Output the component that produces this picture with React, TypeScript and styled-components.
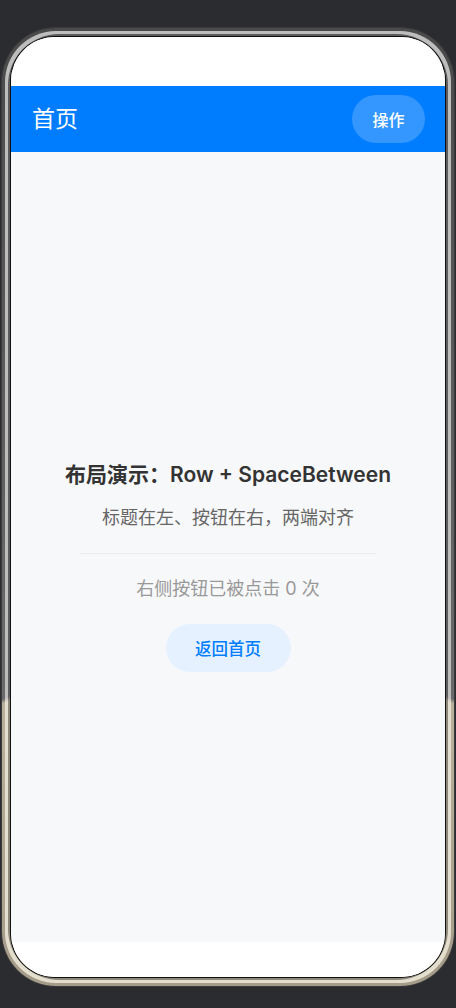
import { useState } from 'react'
import styled, { createGlobalStyle } from 'styled-components'

const GlobalStyle = createGlobalStyle`
    html, body {
        margin: 0;
        padding: 0;
        background: #2b2c30;
    }
    body {
        font-family: Inter, "Noto Sans CJK SC", "Noto Sans", sans-serif;
        -webkit-font-smoothing: antialiased;
    }
`

const App = () => {
    const [count, setCount] = useState(0);

    return (
        <>
            <GlobalStyle />
            <Stage>
                <Bezel>
                    <Ring tone="#bdbdbd" lower="#e4decf">
                        <Ring tone="#5c5c5c" lower="#8d877a">
                            <Screen>
                                <StatusBar />
                                <Header>
                                    <HeaderTitle>首页</HeaderTitle>
                                    <ActionButton onClick={() => setCount(count + 1)}>操作</ActionButton>
                                </Header>
                                <Body>
                                    <Title>布局演示：Row + SpaceBetween</Title>
                                    <Subtitle>标题在左、按钮在右，两端对齐</Subtitle>
                                    <Divider />
                                    <Counter>右侧按钮已被点击 {count} 次</Counter>
                                    <BackButton onClick={() => setCount(0)}>返回首页</BackButton>
                                </Body>
                                <NavArea />
                            </Screen>
                        </Ring>
                    </Ring>
                </Bezel>
            </Stage>
        </>
    );
}

const Stage = styled.div`
    width: 456px;
    height: 1008px;
    padding: 28px 2px 0px 2px;
    box-sizing: border-box;
`

const Bezel = styled.div`
    width: 452px;
    height: 958px;
    box-sizing: border-box;
    padding: 3px;
    border-radius: 54px;
    background: linear-gradient(180deg, #4a4a4a 0%, #6a6a6a 70%, #b8b09c 70.5%, #a49c88 100%);
    box-shadow: 0 0 0 1px #3a3a3c;
`

const Ring = styled.div<{tone: string, lower: string}>`
    height: 100%;
    box-sizing: border-box;
    padding: 3px;
    border-radius: 51px;
    background: linear-gradient(180deg, ${(props) => props.tone} 0%, ${(props) => props.tone} 70%, ${(props) => props.lower} 70.5%, ${(props) => props.lower} 100%);
`

const Screen = styled.div`
    height: 100%;
    display: flex;
    flex-direction: column;
    overflow: hidden;
    border-radius: 44px;
    background: #ffffff;
    box-shadow: 0 0 0 1px #111;
`

const StatusBar = styled.div`
    height: 49px;
    flex-shrink: 0;
    background: #ffffff;
`

const Header = styled.div`
    height: 66px;
    flex-shrink: 0;
    display: flex;
    align-items: center;
    justify-content: space-between;
    padding: 0px 20px 0px 21px;
    background: #007dff;
`

const HeaderTitle = styled.div`
    color: #ffffff;
    font-size: 23px;
    font-weight: 400;
    line-height: 30px;
`

const ActionButton = styled.button`
    width: 73px;
    height: 48px;
    border: none;
    border-radius: 24px;
    background: rgba(255, 255, 255, 0.2);
    color: #ffffff;
    font-family: inherit;
    font-size: 16px;
    font-weight: 500;
    cursor: pointer;
`

const Body = styled.div`
    flex: 1;
    display: flex;
    flex-direction: column;
    align-items: center;
    justify-content: center;
    padding-top: 39px;
    background: #f7f8fa;
`

const Title = styled.div`
    color: #333333;
    font-size: 21px;
    font-weight: 600;
    line-height: 28px;
`

const Subtitle = styled.div`
    margin-top: 18px;
    color: #666666;
    font-size: 18px;
    line-height: 22px;
`

const Divider = styled.div`
    width: 298px;
    height: 1px;
    margin-top: 24px;
    background: #ebedf0;
`

const Counter = styled.div`
    margin-top: 24px;
    color: #999999;
    font-size: 18px;
    line-height: 22px;
`

const BackButton = styled.button`
    width: 125px;
    height: 48px;
    margin-top: 24px;
    border: none;
    border-radius: 24px;
    background: #e6f1ff;
    color: #007dff;
    font-family: inherit;
    font-size: 16.5px;
    font-weight: 500;
    cursor: pointer;
`

const NavArea = styled.div`
    height: 35px;
    flex-shrink: 0;
    background: #ffffff;
`

export default App;
